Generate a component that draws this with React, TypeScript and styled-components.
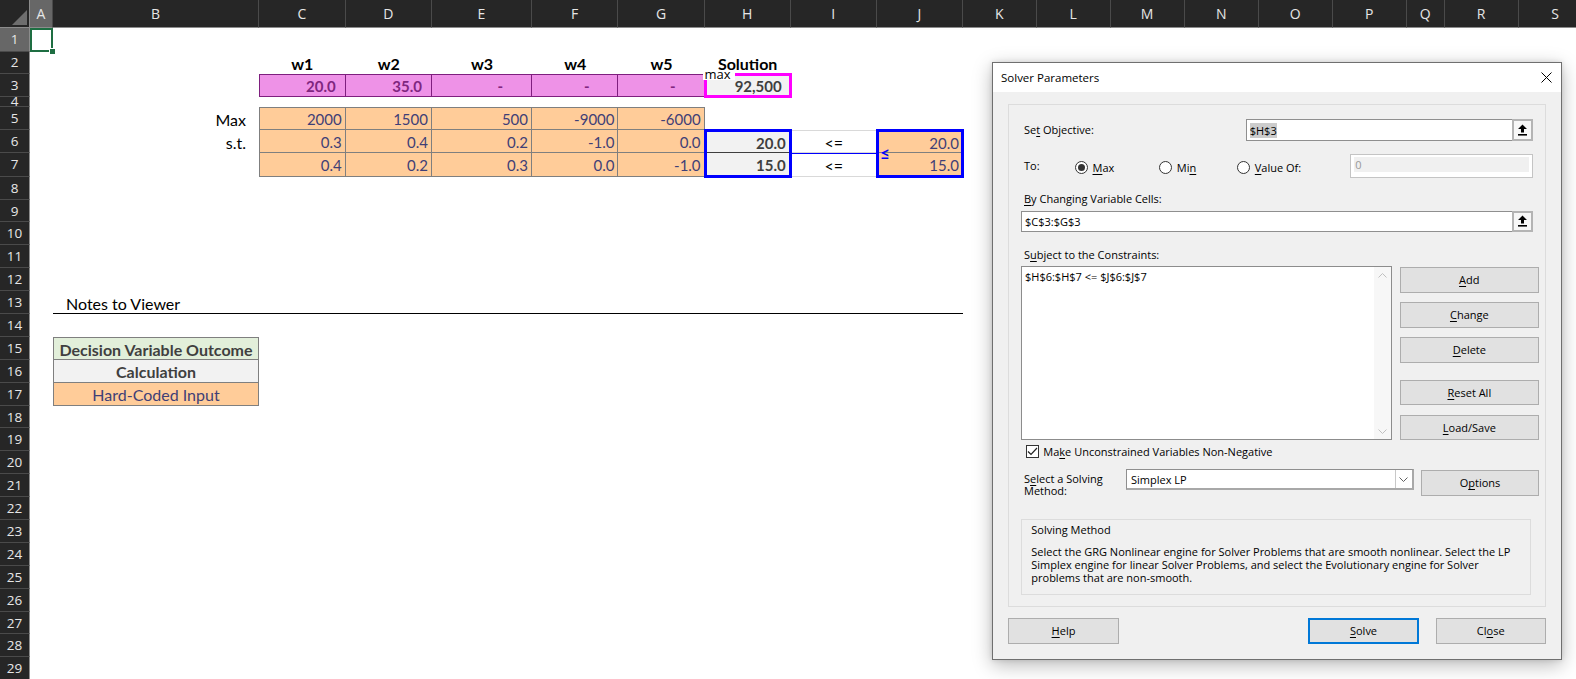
import React from "react";
import styled, { createGlobalStyle } from "styled-components";

const GlobalStyle = createGlobalStyle`
  html, body { margin: 0; padding: 0; background: #ffffff; }
  body { overflow: hidden; font-family: Lato, "Liberation Sans", sans-serif; }
  #root { position: relative; width: 1576px; height: 679px; overflow: hidden; }
`;

const COLS: [string, number][] = [
  ["A", 23], ["B", 206], ["C", 86.7], ["D", 86.3], ["E", 100], ["F", 86.5], ["G", 86.1],
  ["H", 86.1], ["I", 86.3], ["J", 86], ["K", 73.7], ["L", 74], ["M", 74], ["N", 74],
  ["O", 74], ["P", 74], ["Q", 38], ["R", 74], ["S", 74], ["T", 74],
];
const ROW_H: number[] = [23.5, 22.5, 22.7, 10, 23.3, 23.3, 23.4, ...Array(23).fill(22.9)];
const colNo = (l: string) => COLS.findIndex((c) => c[0] === l) + 2;

const PINK_BG = "#EE92E7";
const PINK_FG = "#80267F";
const PINK_BORDER = "#7E1F7E";
const IN_BG = "#FFCC99";
const IN_FG = "#3F3F76";
const IN_BORDER = "#7F7F7F";
const OUT_BG = "#F2F2F2";
const OUT_FG = "#3F3F3F";
const TEXT_SIZE = 16;
const NUM_SIZE = 15;

type CellSpec = {
  r: number; c: string; cs?: number; rs?: number; text: string; fs?: number;
  bg?: string; fg?: string; bold?: boolean; align?: "left" | "center" | "right";
  pr?: number; pl?: number; bt?: string; br?: string; bb?: string; bl?: string;
};

const cells: CellSpec[] = [];
const dataCols = ["C", "D", "E", "F", "G"];
["w1", "w2", "w3", "w4", "w5"].forEach((t, i) =>
  cells.push({ r: 2, c: dataCols[i], text: t, bold: true, align: "center", fs: TEXT_SIZE })
);
cells.push({ r: 2, c: "H", text: "Solution", bold: true, align: "center", fs: TEXT_SIZE });
["20.0", "35.0", "-", "-", "-"].forEach((v, i) =>
  cells.push({
    r: 3, c: dataCols[i], text: v, bg: PINK_BG, fg: PINK_FG, bold: true, align: "right",
    pr: v === "-" ? 28 : 9, bt: PINK_BORDER, bb: PINK_BORDER, br: PINK_BORDER,
    bl: i === 0 ? PINK_BORDER : undefined,
  })
);
cells.push({ r: 3, c: "H", text: "92,500", bg: OUT_BG, fg: OUT_FG, bold: true, align: "right", pr: 9 });
const inputRows = [
  ["2000", "1500", "500", "-9000", "-6000"],
  ["0.3", "0.4", "0.2", "-1.0", "0.0"],
  ["0.4", "0.2", "0.3", "0.0", "-1.0"],
];
inputRows.forEach((vals, ri) =>
  vals.forEach((v, i) =>
    cells.push({
      r: 5 + ri, c: dataCols[i], text: v, bg: IN_BG, fg: IN_FG, align: "right", pr: 3,
      bt: ri === 0 ? IN_BORDER : undefined, bl: i === 0 ? IN_BORDER : undefined,
      br: IN_BORDER, bb: IN_BORDER,
    })
  )
);
cells.push({ r: 5, c: "B", text: "Max", align: "right", pr: 13, fs: TEXT_SIZE });
cells.push({ r: 6, c: "B", text: "s.t.", align: "right", pr: 13, fs: TEXT_SIZE });
[["20.0", 6], ["15.0", 7]].forEach(([v, r]) => {
  const row = r as number;
  cells.push({
    r: row, c: "H", text: v as string, bg: OUT_BG, fg: OUT_FG, bold: true, align: "right", pr: 4,
    bt: row === 6 ? OUT_FG : undefined, bb: OUT_FG, bl: OUT_FG, br: OUT_FG,
  });
  cells.push({
    r: row, c: "I", text: "<=", align: "center", fs: TEXT_SIZE,
    bt: row === 6 ? "#D9D9D9" : undefined, bb: "#D9D9D9",
  });
  cells.push({
    r: row, c: "J", text: v as string, bg: IN_BG, fg: IN_FG, align: "right", pr: 3,
    bt: row === 6 ? IN_BORDER : undefined, bb: IN_BORDER, bl: IN_BORDER, br: IN_BORDER,
  });
});
cells.push({ r: 13, c: "B", cs: 9, text: "Notes to Viewer", align: "left", pl: 13, bb: "#000000", fs: TEXT_SIZE });
cells.push({
  r: 15, c: "B", text: "Decision Variable Outcome", bg: "#E2EFDA", fg: OUT_FG, bold: true, fs: TEXT_SIZE,
  align: "center", bt: IN_BORDER, bl: IN_BORDER, br: IN_BORDER, bb: IN_BORDER,
});
cells.push({
  r: 16, c: "B", text: "Calculation", bg: OUT_BG, fg: OUT_FG, bold: true, fs: TEXT_SIZE,
  align: "center", bl: IN_BORDER, br: IN_BORDER, bb: IN_BORDER,
});
cells.push({
  r: 17, c: "B", text: "Hard-Coded Input", bg: IN_BG, fg: IN_FG, fs: TEXT_SIZE,
  align: "center", bl: IN_BORDER, br: IN_BORDER, bb: IN_BORDER,
});

/* ---------------- Sheet ---------------- */

const Sheet = styled.div`
  display: grid;
  grid-template-columns: 30px ${COLS.map((c) => c[1] + "px").join(" ")};
  grid-template-rows: 28px ${ROW_H.map((h) => h + "px").join(" ")};
  width: 1576px;
  height: 679px;
  overflow: hidden;
  background: #ffffff;
`;

const Corner = styled.div`
  grid-row: 1;
  grid-column: 1;
  background: #262626;
  box-sizing: border-box;
  border-right: 1px solid #8c8c8c;
  border-bottom: 1px solid #8c8c8c;
  display: flex;
  align-items: flex-end;
  justify-content: flex-end;
  padding: 0 2px 2px 0;
`;

const ColHead = styled.div<{ $c: number; $sel?: boolean }>`
  grid-row: 1;
  grid-column: ${(p) => p.$c};
  background: ${(p) => (p.$sel ? "#676767" : "#262626")};
  color: #e6e6e6;
  font-family: "Open Sans", "Noto Sans", sans-serif;
  font-size: 14px;
  display: flex;
  align-items: center;
  justify-content: center;
  box-sizing: border-box;
  border-right: 1px solid #4a4a4a;
  border-bottom: 1px solid #8c8c8c;
  overflow: hidden;
`;

const RowHead = styled.div<{ $r: number; $sel?: boolean }>`
  grid-row: ${(p) => p.$r};
  grid-column: 1;
  background: ${(p) => (p.$sel ? "#676767" : "#262626")};
  color: #e6e6e6;
  font-family: "Open Sans", "Noto Sans", sans-serif;
  font-size: 13.5px;
  display: flex;
  align-items: center;
  justify-content: center;
  box-sizing: border-box;
  border-right: 1px solid #8c8c8c;
  border-bottom: 1px solid #4a4a4a;
  overflow: hidden;
`;

const bd = (c?: string) => (c ? `1px solid ${c}` : "none");

const CellBox = styled.div<{
  $r: number; $c: number; $rs: number; $cs: number; $align: string; $pr: number; $pl: number; $fs: number;
  $bg: string; $fg: string; $bold: boolean; $bt?: string; $br?: string; $bb?: string; $bl?: string;
}>`
  grid-row: ${(p) => p.$r} / span ${(p) => p.$rs};
  grid-column: ${(p) => p.$c} / span ${(p) => p.$cs};
  box-sizing: border-box;
  display: flex;
  align-items: center;
  justify-content: ${(p) =>
    p.$align === "right" ? "flex-end" : p.$align === "center" ? "center" : "flex-start"};
  padding: 2px ${(p) => p.$pr}px 0 ${(p) => p.$pl}px;
  background: ${(p) => p.$bg};
  color: ${(p) => p.$fg};
  font-weight: ${(p) => (p.$bold ? 700 : 400)};
  font-size: ${(p) => p.$fs}px;
  white-space: nowrap;
  border-top: ${(p) => bd(p.$bt)};
  border-right: ${(p) => bd(p.$br)};
  border-bottom: ${(p) => bd(p.$bb)};
  border-left: ${(p) => bd(p.$bl)};
`;

const RangeOutline = styled.div<{ $r: number; $c: number; $rs: number; $color: string }>`
  grid-row: ${(p) => p.$r} / span ${(p) => p.$rs};
  grid-column: ${(p) => p.$c};
  outline: 3px solid ${(p) => p.$color};
  outline-offset: -2px;
  position: relative;
  z-index: 3;
  pointer-events: none;
  display: flex;
  align-items: center;
`;

const MaxTag = styled.span`
  position: absolute;
  left: -2px;
  top: -4px;
  height: 10px;
  padding: 0 4px 0 2px;
  background: #ffffff;
  color: #000000;
  font-family: "Open Sans", "Noto Sans", sans-serif;
  font-size: 13px;
  line-height: 8px;
  z-index: 4;
`;

const Connector = styled.div`
  grid-row: 7 / span 2;
  grid-column: ${colNo("I")};
  display: flex;
  align-items: center;
  z-index: 2;
  margin: 0 -1px;
`;

const ConnectorLine = styled.div`
  flex: 1;
  height: 1px;
  background: #0000ff;
  margin-top: 1px;
`;

const LeqMark = styled.span`
  color: #0000ff;
  font-weight: 700;
  font-size: 17px;
  line-height: 17px;
  padding-left: 3px;
  margin-top: 1px;
`;

const ActiveCell = styled.div`
  grid-row: 2;
  grid-column: 2;
  box-shadow: inset 0 0 0 2px #1e6e42;
  position: relative;
  z-index: 3;
`;

const FillHandle = styled.span`
  position: absolute;
  right: -3px;
  bottom: -3px;
  width: 5px;
  height: 5px;
  background: #1e6e42;
  border: 1px solid #ffffff;
`;

/* ---------------- Dialog ---------------- */

const Dialog = styled.div`
  position: absolute;
  left: 992px;
  top: 62px;
  width: 570px;
  height: 598px;
  box-sizing: border-box;
  border: 1px solid #6f6f6f;
  background: #f0f0f0;
  box-shadow: 0 5px 18px rgba(0, 0, 0, 0.28), 0 0 5px rgba(0, 0, 0, 0.12);
  display: flex;
  flex-direction: column;
  font-family: "Open Sans", "Noto Sans", sans-serif;
  font-size: 11px;
  color: #000000;
  z-index: 20;
  overflow: hidden;
`;

const TitleBar = styled.div`
  height: 29px;
  flex: none;
  background: #ffffff;
  display: flex;
  align-items: center;
  justify-content: space-between;
  padding-left: 8px;
`;

const TitleText = styled.span`
  font-size: 11.5px;
`;

const CloseButton = styled.div`
  width: 30px;
  height: 29px;
  display: flex;
  align-items: center;
  justify-content: center;
`;

const Body = styled.div`
  padding: 12px 15.3px 0 14.5px;
  display: flex;
  flex-direction: column;
`;

const Group = styled.div`
  height: 503.3px;
  box-sizing: border-box;
  border: 1px solid #dcdcdc;
  padding-left: 12.5px;
  display: flex;
  flex-direction: column;
`;

const FieldRow = styled.div<{ $mt: number; $h: number; $cols: string }>`
  margin-top: ${(p) => p.$mt}px;
  height: ${(p) => p.$h}px;
  display: grid;
  grid-template-columns: ${(p) => p.$cols};
  align-items: center;
`;

const Label = styled.div<{ $mt?: number }>`
  padding-left: 3px;
  line-height: 16px;
  height: 16px;
  margin-top: ${(p) => p.$mt ?? 0}px;
  white-space: nowrap;
`;

const TextField = styled.div<{ $w?: number; $mt?: number; $h?: number }>`
  width: ${(p) => (p.$w ? p.$w + "px" : "auto")};
  height: ${(p) => (p.$h ? p.$h + "px" : "100%")};
  margin-top: ${(p) => p.$mt ?? 0}px;
  box-sizing: border-box;
  border: 1px solid #8f8f8f;
  background: #ffffff;
  display: flex;
  align-items: center;
  padding-left: 3px;
  white-space: nowrap;
`;

const Selected = styled.span`
  background: #cccccc;
`;

const RefButton = styled.div`
  margin: -1px -1px -1px auto;
  width: 21px;
  height: calc(100% + 2px);
  box-sizing: border-box;
  border: 2px solid #b4b4b4;
  background: #f7f7f7;
  display: flex;
  align-items: center;
  justify-content: center;
`;

const RadioOption = styled.div`
  display: flex;
  align-items: center;
  gap: 5px;
  padding-top: 3px;
  white-space: nowrap;
`;

const RadioCircle = styled.span<{ $on?: boolean }>`
  width: 13px;
  height: 13px;
  box-sizing: border-box;
  border: 1px solid #333333;
  border-radius: 50%;
  background: #ffffff;
  display: flex;
  align-items: center;
  justify-content: center;
  &::after {
    content: "";
    width: 7px;
    height: 7px;
    border-radius: 50%;
    background: ${(p) => (p.$on ? "#333333" : "transparent")};
  }
`;

const DisabledField = styled.div`
  height: 100%;
  box-sizing: border-box;
  border: 1px solid #c4c4c4;
  background: #ffffff;
  padding: 2px 3px 5px 3px;
  display: flex;
`;

const DisabledInner = styled.div`
  flex: 1;
  background: #f0f0f0;
  color: #9a9a9a;
  display: flex;
  align-items: center;
  padding-left: 1px;
`;

const ConstraintArea = styled.div`
  margin-top: 3px;
  height: 172.3px;
  display: grid;
  grid-template-columns: 371.3px 138.7px;
  column-gap: 7.7px;
`;

const ListBox = styled.div`
  box-sizing: border-box;
  border: 1px solid #8c8c8c;
  background: #ffffff;
  display: flex;
`;

const ListContent = styled.div`
  flex: 1;
  padding: 2px 0 0 3px;
  line-height: 16px;
  white-space: nowrap;
`;

const ScrollBar = styled.div`
  width: 17px;
  background: #f7f7f7;
  display: flex;
  flex-direction: column;
  justify-content: space-between;
  align-items: center;
  padding: 6px 0 5px;
  box-sizing: border-box;
`;

const ButtonColumn = styled.div`
  display: flex;
  flex-direction: column;
  padding-top: 1.3px;
`;

const DlgButton = styled.div<{ $w?: number; $h?: number; $mt?: number; $primary?: boolean }>`
  width: ${(p) => (p.$w ? p.$w + "px" : "100%")};
  height: ${(p) => p.$h ?? 25.4}px;
  margin-top: ${(p) => p.$mt ?? 0}px;
  flex: none;
  box-sizing: border-box;
  background: #e1e1e1;
  border: ${(p) => (p.$primary ? "2px solid #0078d7" : "1px solid #adadad")};
  display: flex;
  align-items: center;
  justify-content: center;
  white-space: nowrap;
`;

const CheckRow = styled.div`
  margin-top: 5.7px;
  height: 16px;
  display: flex;
  align-items: center;
  gap: 4.3px;
  padding-left: 5px;
  white-space: nowrap;
`;

const CheckBox = styled.span`
  width: 13px;
  height: 13px;
  box-sizing: border-box;
  border: 1px solid #333333;
  background: #ffffff;
  display: flex;
  align-items: center;
  justify-content: center;
`;

const SelectRow = styled.div`
  margin-top: 9.3px;
  display: grid;
  grid-template-columns: 105px 287.7px 7.6px 117.4px;
  align-items: start;
`;

const SelectLabel = styled.div`
  padding: 3.8px 0 0 3px;
  line-height: 12.4px;
  white-space: nowrap;
`;

const Dropdown = styled.div`
  height: 21px;
  box-sizing: border-box;
  border: 1px solid #8f8f8f;
  border-right: 2px solid #a8a8a8;
  border-bottom: 2px solid #a8a8a8;
  background: #ffffff;
  display: flex;
  align-items: center;
  padding-left: 4px;
`;

const DropdownText = styled.span`
  flex: 1;
`;

const ArrowBox = styled.div`
  width: 17px;
  height: 100%;
  box-sizing: border-box;
  border-left: 1px solid #c8c8c8;
  display: flex;
  align-items: center;
  justify-content: center;
`;

const SolvingBox = styled.div`
  margin-top: 21.6px;
  width: 510px;
  height: 76px;
  box-sizing: border-box;
  border: 1px solid #dcdcdc;
  padding: 2px 8px 0 9.3px;
`;

const BoxTitle = styled.div`
  line-height: 16px;
  white-space: nowrap;
`;

const Description = styled.div`
  margin-top: 6.5px;
  line-height: 13px;
`;

const DescLine = styled.div`
  white-space: nowrap;
`;

const Footer = styled.div`
  margin-top: 11px;
  display: flex;
  align-items: center;
  padding-left: 0.8px;
`;

const Spacer = styled.div`
  flex: 1;
`;

const FooterGap = styled.div`
  width: 17px;
  flex: none;
`;

const Key = styled.u`
  text-underline-offset: 1.5px;
`;

const UpArrowIcon = () => (
  <svg width="11" height="12" viewBox="0 0 11 12">
    <polygon points="5.5,0.5 10,5 7,5 7,8.5 4,8.5 4,5 1,5" fill="#000" />
    <rect x="1" y="10" width="9" height="1.6" fill="#000" />
  </svg>
);

const Chevron = ({ up, color = "#c0c0c0" }: { up?: boolean; color?: string }) => (
  <svg width="9" height="5" viewBox="0 0 9 5">
    <polyline
      points={up ? "0.5,4.5 4.5,0.5 8.5,4.5" : "0.5,0.5 4.5,4.5 8.5,0.5"}
      fill="none"
      stroke={color}
      strokeWidth="1"
    />
  </svg>
);

const SolverDialog = () => (
  <Dialog>
    <TitleBar>
      <TitleText>Solver Parameters</TitleText>
      <CloseButton>
        <svg width="11" height="11" viewBox="0 0 11 11">
          <path d="M0.5 0.5 L10.5 10.5 M10.5 0.5 L0.5 10.5" stroke="#000" strokeWidth="1" />
        </svg>
      </CloseButton>
    </TitleBar>
    <Body>
      <Group>
        <FieldRow $mt={14} $h={22} $cols="224.7px 287px">
          <Label>
            Se<Key>t</Key> Objective:
          </Label>
          <TextField>
            <Selected>$H$3</Selected>
            <RefButton>
              <UpArrowIcon />
            </RefButton>
          </TextField>
        </FieldRow>
        <FieldRow $mt={13.3} $h={21.4} $cols="53.5px 84.3px 78px 113.5px 182.4px">
          <Label>To:</Label>
          <RadioOption>
            <RadioCircle $on />
            <span>
              <Key>M</Key>ax
            </span>
          </RadioOption>
          <RadioOption>
            <RadioCircle />
            <span>
              Mi<Key>n</Key>
            </span>
          </RadioOption>
          <RadioOption>
            <RadioCircle />
            <span>
              <Key>V</Key>alue Of:
            </span>
          </RadioOption>
          <DisabledField>
            <DisabledInner>0</DisabledInner>
          </DisabledField>
        </FieldRow>
        <Label $mt={15.3}>
          <Key>B</Key>y Changing Variable Cells:
        </Label>
        <TextField $w={511.7} $h={21} $mt={3.7}>
          $C$3:$G$3
          <RefButton>
            <UpArrowIcon />
          </RefButton>
        </TextField>
        <Label $mt={15.3}>
          S<Key>u</Key>bject to the Constraints:
        </Label>
        <ConstraintArea>
          <ListBox>
            <ListContent>$H$6:$H$7 &lt;= $J$6:$J$7</ListContent>
            <ScrollBar>
              <Chevron up />
              <Chevron />
            </ScrollBar>
          </ListBox>
          <ButtonColumn>
            <DlgButton>
              <span>
                <Key>A</Key>dd
              </span>
            </DlgButton>
            <DlgButton $mt={9.6}>
              <span>
                <Key>C</Key>hange
              </span>
            </DlgButton>
            <DlgButton $mt={9.6}>
              <span>
                <Key>D</Key>elete
              </span>
            </DlgButton>
            <DlgButton $mt={17.3}>
              <span>
                <Key>R</Key>eset All
              </span>
            </DlgButton>
            <DlgButton $mt={9.3}>
              <span>
                <Key>L</Key>oad/Save
              </span>
            </DlgButton>
          </ButtonColumn>
        </ConstraintArea>
        <CheckRow>
          <CheckBox>
            <svg width="11" height="9" viewBox="0 0 11 9">
              <polyline points="1,4.5 4,7.5 10,1" fill="none" stroke="#222" strokeWidth="1.2" />
            </svg>
          </CheckBox>
          <span>
            Ma<Key>k</Key>e Unconstrained Variables Non-Negative
          </span>
        </CheckRow>
        <SelectRow>
          <SelectLabel>
            S<Key>e</Key>lect a Solving
            <br />
            Method:
          </SelectLabel>
          <Dropdown>
            <DropdownText>Simplex LP</DropdownText>
            <ArrowBox>
              <Chevron color="#606060" />
            </ArrowBox>
          </Dropdown>
          <span />
          <DlgButton $h={25.7} $mt={0.7}>
            <span>
              O<Key>p</Key>tions
            </span>
          </DlgButton>
        </SelectRow>
        <SolvingBox>
          <BoxTitle>Solving Method</BoxTitle>
          <Description>
            <DescLine>
              Select the GRG Nonlinear engine for Solver Problems that are smooth nonlinear. Select the LP
            </DescLine>
            <DescLine>
              Simplex engine for linear Solver Problems, and select the Evolutionary engine for Solver
            </DescLine>
            <DescLine>problems that are non-smooth.</DescLine>
          </Description>
        </SolvingBox>
      </Group>
      <Footer>
        <DlgButton $w={110.4}>
          <span>
            <Key>H</Key>elp
          </span>
        </DlgButton>
        <Spacer />
        <DlgButton $w={110.4} $primary>
          <span>
            <Key>S</Key>olve
          </span>
        </DlgButton>
        <FooterGap />
        <DlgButton $w={110}>
          <span>
            Cl<Key>o</Key>se
          </span>
        </DlgButton>
      </Footer>
    </Body>
  </Dialog>
);

export default function App() {
  return (
    <>
      <GlobalStyle />
      <Sheet>
        <Corner>
          <svg width="15" height="15" viewBox="0 0 15 15">
            <polygon points="15,0 15,15 0,15" fill="#6e6e6e" />
          </svg>
        </Corner>
        {COLS.map(([l], i) => (
          <ColHead key={l} $c={i + 2} $sel={l === "A"}>
            {l}
          </ColHead>
        ))}
        {ROW_H.map((_, i) => (
          <RowHead key={i} $r={i + 2} $sel={i === 0}>
            {i + 1}
          </RowHead>
        ))}
        {cells.map((s, i) => (
          <CellBox
            key={i}
            $r={s.r + 1}
            $c={colNo(s.c)}
            $rs={s.rs ?? 1}
            $cs={s.cs ?? 1}
            $align={s.align ?? "left"}
            $pr={s.pr ?? 3}
            $pl={s.pl ?? 3}
            $fs={s.fs ?? NUM_SIZE}
            $bg={s.bg ?? "transparent"}
            $fg={s.fg ?? "#000000"}
            $bold={!!s.bold}
            $bt={s.bt}
            $br={s.br}
            $bb={s.bb}
            $bl={s.bl}
          >
            {s.text}
          </CellBox>
        ))}
        <ActiveCell>
          <FillHandle />
        </ActiveCell>
        <RangeOutline $r={4} $c={colNo("H")} $rs={1} $color="#ff00ff">
          <MaxTag>max</MaxTag>
        </RangeOutline>
        <Connector>
          <ConnectorLine />
        </Connector>
        <RangeOutline $r={7} $c={colNo("H")} $rs={2} $color="#0000ff" />
        <RangeOutline $r={7} $c={colNo("J")} $rs={2} $color="#0000ff">
          <LeqMark>≤</LeqMark>
        </RangeOutline>
      </Sheet>
      <SolverDialog />
    </>
  );
}
